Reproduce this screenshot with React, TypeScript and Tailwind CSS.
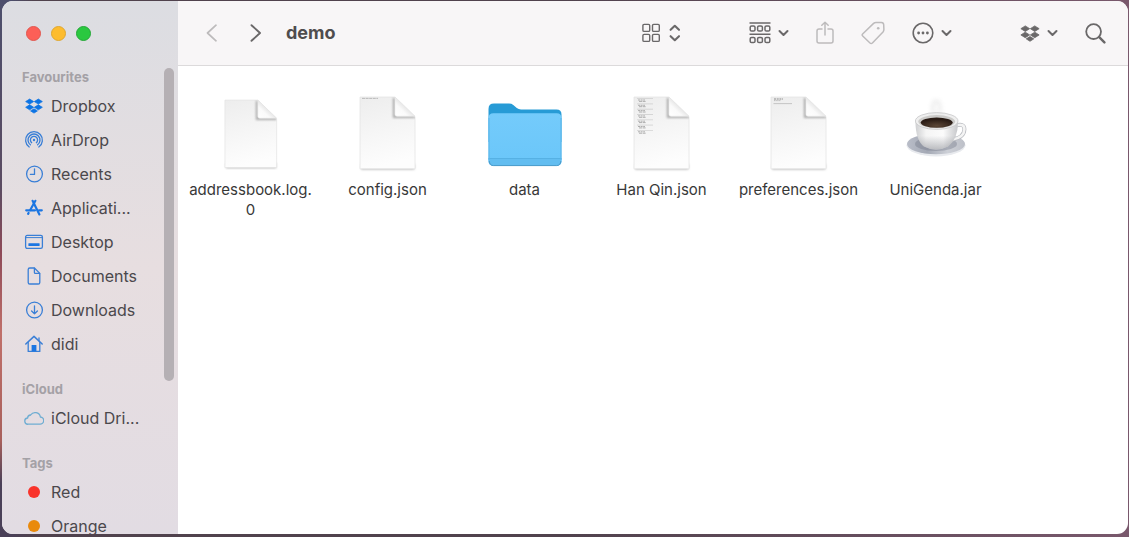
import type { ReactNode } from "react";

type IconProps = { className?: string };

const DROPBOX =
  "M5.7 1 L10.6 4.1 L5.7 7.2 L0.8 4.1 Z M16.3 1 L21.2 4.1 L16.3 7.2 L11.4 4.1 Z M5.7 8 L10.6 11.1 L5.7 14.2 L0.8 11.1 Z M16.3 8 L21.2 11.1 L16.3 14.2 L11.4 11.1 Z M11 12.9 L15.2 15.5 L11 18.2 L6.8 15.5 Z";

function Dropbox({ className }: IconProps) {
  return (
    <svg
      viewBox="0 0 22 19"
      className={className}
      fill="currentColor"
      stroke="currentColor"
      strokeWidth="0.9"
      strokeLinejoin="round"
      aria-hidden="true"
    >
      <path d={DROPBOX} />
    </svg>
  );
}

function Glyph({ children }: { children: ReactNode }) {
  return (
    <svg
      viewBox="0 0 20 20"
      className="h-5 w-5 shrink-0 text-[#3a7fd6]"
      fill="none"
      stroke="currentColor"
      strokeWidth="1.3"
      strokeLinecap="round"
      strokeLinejoin="round"
      aria-hidden="true"
    >
      {children}
    </svg>
  );
}

const favourites: { name: string; icon: ReactNode }[] = [
  {
    name: "Dropbox",
    icon: (
      <span className="flex h-5 w-5 shrink-0 items-center justify-center text-[#0d74e4]">
        <Dropbox className="h-4 w-[18px]" />
      </span>
    ),
  },
  {
    name: "AirDrop",
    icon: (
      <Glyph>
        <path d="M5.2 17 A8.4 8.4 0 1 1 14.8 17" />
        <path d="M6.4 14.8 A6 6 0 1 1 13.6 14.8" />
        <path d="M7.7 12.7 A3.6 3.6 0 1 1 12.3 12.7" />
        <circle cx="10" cy="10" r="1.2" fill="currentColor" stroke="none" />
      </Glyph>
    ),
  },
  {
    name: "Recents",
    icon: (
      <Glyph>
        <circle cx="10.5" cy="10" r="7.9" />
        <path d="M10.5 4.8 V10.4 H6.4" />
      </Glyph>
    ),
  },
  {
    name: "Applicati...",
    icon: (
      <Glyph>
        <g strokeWidth="2.2" stroke="#1c76e2">
          <path d="M8.6 2.8 L15.4 16.4" />
          <path d="M11.4 2.8 L6.2 12" />
          <path d="M2.2 12.3 H11" />
          <path d="M15 12.3 H17.8" />
          <path d="M4.6 15 L4.1 15.9" />
        </g>
      </Glyph>
    ),
  },
  {
    name: "Desktop",
    icon: (
      <Glyph>
        <rect x="1.6" y="3.4" width="16.8" height="13" rx="1.6" />
        <path d="M2 5.6 H18" strokeWidth="1" />
        <rect x="4.4" y="11.2" width="11.2" height="2.9" rx="0.5" fill="#1c76e2" stroke="none" />
      </Glyph>
    ),
  },
  {
    name: "Documents",
    icon: (
      <Glyph>
        <path d="M5.8 2 H10.4 L15.8 7.4 V16.4 A1.6 1.6 0 0 1 14.2 18 H5.8 A1.6 1.6 0 0 1 4.2 16.4 V3.6 A1.6 1.6 0 0 1 5.8 2 Z" />
        <path d="M10.4 2.2 V6.4 A1 1 0 0 0 11.4 7.4 H15.6" />
      </Glyph>
    ),
  },
  {
    name: "Downloads",
    icon: (
      <Glyph>
        <circle cx="10.5" cy="10" r="7.9" />
        <path d="M10.5 5.8 V13.8 M7.6 11 L10.5 13.9 L13.4 11" />
      </Glyph>
    ),
  },
  {
    name: "didi",
    icon: (
      <Glyph>
        <path d="M1.8 10 L10 2.4 L18.2 10" strokeWidth="1.5" />
        <path d="M4.2 8.4 V17.4 H15.8 V8.4 M15 6.8 V3.8" />
        <rect x="7.6" y="11" width="4.8" height="6.4" fill="#1c76e2" stroke="none" />
      </Glyph>
    ),
  },
];

const cloud: { name: string; icon: ReactNode }[] = [
  {
    name: "iCloud Dri...",
    icon: (
      <svg
        viewBox="0 0 20 20"
        className="h-5 w-5 shrink-0 text-[#6fadd2]"
        fill="none"
        stroke="currentColor"
        strokeWidth="1.3"
        aria-hidden="true"
      >
        <path d="M4.2 16.2 H15.8 A3.6 3.6 0 0 0 16.4 9 A5.4 5.4 0 0 0 6.6 7 A3.2 3.2 0 0 0 3.6 10 A3.1 3.1 0 0 0 4.2 16.2 Z" />
      </svg>
    ),
  },
];

const tags: { name: string; icon: ReactNode }[] = [
  { name: "Red", icon: <TagDot color="bg-[#f9332b]" /> },
  { name: "Orange", icon: <TagDot color="bg-[#e98a0c]" /> },
];

function TagDot({ color }: { color: string }) {
  return (
    <span className="flex h-5 w-5 shrink-0 items-center justify-center">
      <span className={`h-3 w-3 rounded-full ${color}`} />
    </span>
  );
}

function Section({ title, items }: { title: string; items: { name: string; icon: ReactNode }[] }) {
  return (
    <section className="mb-4">
      <h2 className="pl-5 text-[13px] leading-6 font-bold text-[#a4a1a6]">{title}</h2>
      <ul>
        {items.map((item) => (
          <li key={item.name}>
            <a href="#" className="flex h-[34px] items-center gap-[7px] pl-[22px] text-base leading-4 whitespace-nowrap text-[#4b484c]">
              {item.icon}
              <span>{item.name}</span>
            </a>
          </li>
        ))}
      </ul>
    </section>
  );
}

function Chevron() {
  return (
    <svg viewBox="0 0 11 8" className="h-2 w-[11px]" fill="none" stroke="currentColor" strokeWidth="2" strokeLinecap="round" strokeLinejoin="round" aria-hidden="true">
      <path d="M1.5 2 L5.5 6 L9.5 2" />
    </svg>
  );
}

function ToolButton({ label, faded, children }: { label: string; faded?: boolean; children: ReactNode }) {
  return (
    <button
      type="button"
      aria-label={label}
      disabled={faded}
      className={`flex h-8 shrink-0 items-center gap-[7px] ${faded ? "text-[#bdbbbc]" : "text-[#6a6869]"}`}
    >
      {children}
    </button>
  );
}

function Toolbar() {
  return (
    <header className="flex h-[65px] shrink-0 items-center border-b border-[#dcdadb] bg-[#f8f6f7] pr-[22px] pl-7">
      <div className="flex items-center gap-8">
        <ToolButton label="Back" faded>
          <svg viewBox="0 0 12 18" className="h-[18px] w-3" fill="none" stroke="currentColor" strokeWidth="1.7" strokeLinecap="round" strokeLinejoin="round">
            <path d="M10 1.2 L1.5 9 L10 16.8" />
          </svg>
        </ToolButton>
        <ToolButton label="Forward">
          <svg viewBox="0 0 12 18" className="h-[18px] w-3" fill="none" stroke="currentColor" strokeWidth="1.9" strokeLinecap="round" strokeLinejoin="round">
            <path d="M1.5 1.2 L10 9 L1.5 16.8" />
          </svg>
        </ToolButton>
      </div>
      <h1 className="ml-6 text-lg font-bold text-[#4f4d4e]">demo</h1>

      <div className="ml-auto flex items-center gap-[68px]">
        <ToolButton label="View as icons">
          <svg viewBox="0 0 20 20" className="h-5 w-5" fill="none" stroke="currentColor" strokeWidth="1.4">
            <rect x="0.9" y="1.4" width="6.8" height="7" rx="1.2" />
            <rect x="10.5" y="1.4" width="6.8" height="7" rx="1.2" />
            <rect x="0.9" y="11.4" width="6.8" height="7" rx="1.2" />
            <rect x="10.5" y="11.4" width="6.8" height="7" rx="1.2" />
          </svg>
          <svg viewBox="0 0 12 18" className="h-[18px] w-3" fill="none" stroke="currentColor" strokeWidth="2.1" strokeLinecap="round" strokeLinejoin="round">
            <path d="M1.6 5.8 L5.8 1.8 L10 5.8 M1.6 12.2 L5.8 16.2 L10 12.2" />
          </svg>
        </ToolButton>

        <div className="flex items-center gap-[27px]">
          <ToolButton label="Group by">
            <svg viewBox="0 0 22 22" className="h-[22px] w-[22px]" fill="none" stroke="currentColor" strokeWidth="1.5">
              <path d="M0.5 1 H21.5 M0.5 12.2 H21.5" />
              <rect x="1.2" y="3.9" width="4.8" height="5.2" rx="1.4" />
              <rect x="8.6" y="3.9" width="4.8" height="5.2" rx="1.4" />
              <rect x="16" y="3.9" width="4.8" height="5.2" rx="1.4" />
              <rect x="1.2" y="15.4" width="4.8" height="5.2" rx="1.4" />
              <rect x="8.6" y="15.4" width="4.8" height="5.2" rx="1.4" />
              <rect x="16" y="15.4" width="4.8" height="5.2" rx="1.4" />
            </svg>
            <Chevron />
          </ToolButton>
          <ToolButton label="Share" faded>
            <svg viewBox="0 0 18 24" className="h-6 w-[18px]" fill="none" stroke="currentColor" strokeWidth="1.5" strokeLinecap="round" strokeLinejoin="round">
              <path d="M6 8 H3 A2 2 0 0 0 1 10 V20 A2 2 0 0 0 3 22 H15 A2 2 0 0 0 17 20 V10 A2 2 0 0 0 15 8 H12" />
              <path d="M9 14 V1.4 M5.8 4.2 L9 1.2 L12.2 4.2" />
            </svg>
          </ToolButton>
          <ToolButton label="Tags" faded>
            <svg viewBox="0 0 24 24" className="h-6 w-6" fill="none" stroke="currentColor" strokeWidth="1.5" strokeLinejoin="round">
              <path d="M1.6 13 L12.6 2.4 Q13.6 1.5 15 1.5 L20.4 1.6 Q22.6 1.7 22.7 3.8 L22.9 8.6 Q22.9 10 22 11 L11.4 22 Q10.2 23 9 22 L1.7 15 Q0.7 14 1.6 13 Z" />
              <circle cx="17.2" cy="7.2" r="1.3" fill="currentColor" stroke="none" />
            </svg>
          </ToolButton>
          <ToolButton label="More actions">
            <svg viewBox="0 0 22 22" className="h-[22px] w-[22px]" fill="none" stroke="currentColor" strokeWidth="1.6">
              <circle cx="11" cy="11" r="9.8" />
              <g fill="currentColor" stroke="none">
                <circle cx="6.6" cy="11" r="1.4" />
                <circle cx="11" cy="11" r="1.4" />
                <circle cx="15.4" cy="11" r="1.4" />
              </g>
            </svg>
            <Chevron />
          </ToolButton>
        </div>

        <div className="flex items-center gap-[27px]">
          <ToolButton label="Dropbox">
            <Dropbox className="h-[17px] w-5" />
            <Chevron />
          </ToolButton>
          <ToolButton label="Search">
            <svg viewBox="0 0 21 21" className="h-[21px] w-[21px]" fill="none" stroke="currentColor" strokeWidth="1.8" strokeLinecap="round">
              <circle cx="8.6" cy="8.6" r="7.4" />
              <path d="M14.2 14.2 L19.4 19.4" strokeWidth="2.4" />
            </svg>
          </ToolButton>
        </div>
      </div>
    </header>
  );
}

function Sheet({ id, small, children }: { id: string; small?: boolean; children?: ReactNode }) {
  return (
    <svg viewBox="0 0 84 84" className="h-[84px] w-[84px]" aria-hidden="true">
      <defs>
        <linearGradient id={`${id}-page`} x1="0" y1="0" x2="0.2" y2="1">
          <stop offset="0" stopColor="#ededed" />
          <stop offset="0.55" stopColor="#f6f6f6" />
          <stop offset="1" stopColor="#fdfdfd" />
        </linearGradient>
        <linearGradient id={`${id}-curl`} x1="0" y1="1" x2="0.55" y2="0.45">
          <stop offset="0" stopColor="#ffffff" />
          <stop offset="0.6" stopColor="#fafafa" />
          <stop offset="1" stopColor="#e2e2e2" />
        </linearGradient>
        <filter id={`${id}-blur`} x="-30%" y="-30%" width="160%" height="160%">
          <feGaussianBlur stdDeviation="1" />
        </filter>
        <clipPath id={`${id}-clip`}>
          <path d="M14 5 H49 L69 24.5 V78 H14 Z" />
        </clipPath>
      </defs>
      <g transform={small ? "translate(2.8 3.4) scale(0.94)" : undefined}>
        <path d="M15 72 H68.5 V77.6 H15 Z" fill="#8a8a8a" opacity="0.6" filter={`url(#${id}-blur)`} />
        <path d="M14 5 H49 L69 24.5 V76.8 H14 Z" fill={`url(#${id}-page)`} stroke="#e4e4e4" strokeWidth="0.8" />
        {children}
        <g clipPath={`url(#${id}-clip)`}>
          <path d="M48 6 V25 H69" fill="none" stroke="#8c8c8c" strokeWidth="2.2" opacity="0.7" filter={`url(#${id}-blur)`} />
        </g>
        <path d="M49 5 L69 24.2 H51 Q49 24.2 49 22.2 Z" fill={`url(#${id}-curl)`} stroke="#e6e6e6" strokeWidth="0.5" />
      </g>
    </svg>
  );
}

function ConfigSheet() {
  return (
    <Sheet id="config">
      <path d="M16 6.4 H32" stroke="#b4b4b4" strokeWidth="0.9" strokeDasharray="3 0.6" />
    </Sheet>
  );
}

function HanQinSheet() {
  const rows = [8, 13.3, 18.6, 23.9, 29.2, 34.5, 39.8];
  return (
    <Sheet id="hanqin">
      <g stroke="#aeaeae" strokeWidth="1">
        {rows.map((y) => (
          <g key={y}>
            <path d={`M17 ${y - 1.4} H33`} strokeWidth="0.6" opacity="0.7" />
            <path d={`M18 ${y} H25`} strokeDasharray="2 0.6" />
            <path d={`M19 ${y + 1.4} H26`} strokeDasharray="3 0.6" />
          </g>
        ))}
      </g>
    </Sheet>
  );
}

function PreferencesSheet() {
  return (
    <Sheet id="preferences">
      <g stroke="#adadad" fill="none">
        <path d="M17 7 H26" strokeWidth="1.5" strokeDasharray="2 0.7" />
        <path d="M17 8.6 H24" strokeWidth="0.8" strokeDasharray="1.5 0.7" />
        <path d="M16.5 11.6 H35" strokeWidth="0.8" opacity="0.8" />
      </g>
    </Sheet>
  );
}

function Folder() {
  return (
    <svg viewBox="0 0 84 84" className="h-[84px] w-[84px]" aria-hidden="true">
      <defs>
        <linearGradient id="folder-front" x1="0" y1="0" x2="0" y2="1">
          <stop offset="0" stopColor="#74cbfb" />
          <stop offset="1" stopColor="#6ac6f9" />
        </linearGradient>
      </defs>
      <path d="M5.5 17 Q5.5 11.6 11 11.6 H26 Q28.5 11.6 30.3 13 L33.8 16 Q35.6 17.4 38 17.4 H73.5 Q78.5 17.4 78.5 22.5 V50 H5.5 Z" fill="#279bd6" />
      <path d="M5.5 26 Q5.5 21.2 10.5 21.2 H73.5 Q78.5 21.2 78.5 26 V68.5 Q78.5 73.8 73.5 73.8 H10.5 Q5.5 73.8 5.5 68.5 Z" fill="url(#folder-front)" />
      <path d="M5.5 66.5 H78.5 V68.5 Q78.5 73.8 73.5 73.8 H10.5 Q5.5 73.8 5.5 68.5 Z" fill="#62bdf0" />
      <path d="M5.5 66.5 H78.5" stroke="#52acdf" strokeWidth="0.8" />
      <path d="M6.2 69 Q6.8 73.6 10.5 73.6 H73.5 Q77.4 73.6 77.9 69" fill="none" stroke="#4796c4" strokeWidth="0.9" />
      <path d="M6 26 V68 M78 26 V68" stroke="#5bb5e8" strokeWidth="1" />
    </svg>
  );
}

function Coffee() {
  return (
    <svg viewBox="0 0 84 84" className="h-[84px] w-[84px]" aria-hidden="true">
      <defs>
        <linearGradient id="cup-body" x1="0" y1="0" x2="1" y2="0">
          <stop offset="0" stopColor="#cfd0d2" />
          <stop offset="0.25" stopColor="#f5f5f5" />
          <stop offset="0.65" stopColor="#fbfbfb" />
          <stop offset="1" stopColor="#c6c7ca" />
        </linearGradient>
        <linearGradient id="cup-shade" x1="0" y1="0" x2="0" y2="1">
          <stop offset="0.5" stopColor="#7d8088" stopOpacity="0" />
          <stop offset="1" stopColor="#7d8088" stopOpacity="0.5" />
        </linearGradient>
        <linearGradient id="saucer" x1="0" y1="0" x2="1" y2="0">
          <stop offset="0" stopColor="#b9bdc8" />
          <stop offset="0.35" stopColor="#a4a9b5" />
          <stop offset="0.7" stopColor="#cdd0d7" />
          <stop offset="1" stopColor="#bdc0c8" />
        </linearGradient>
        <radialGradient id="brew" cx="0.5" cy="0.8" r="0.6">
          <stop offset="0" stopColor="#5b4636" />
          <stop offset="1" stopColor="#2a1c15" />
        </radialGradient>
        <filter id="steam" x="-80%" y="-50%" width="260%" height="200%">
          <feGaussianBlur stdDeviation="2" />
        </filter>
      </defs>
      <ellipse cx="42" cy="53.2" rx="29.5" ry="11.2" fill="#e8eaee" />
      <ellipse cx="42" cy="52" rx="29" ry="10.2" fill="url(#saucer)" />
      <ellipse cx="42" cy="52" rx="21" ry="7" fill="#737988" opacity="0.4" />
      <path d="M62 33.5 Q70.5 31 70.4 37.5 Q70 45.5 58.5 47.5" fill="none" stroke="#b9bbc0" strokeWidth="4" />
      <path d="M62 33.5 Q70.5 31 70.4 37.5 Q70 45.5 58.5 47.5" fill="none" stroke="#f4f4f4" strokeWidth="2.6" />
      <path d="M21.5 30 Q21.5 48 30 54.5 Q42 60.5 54 54.5 Q64 47 64 30 Z" fill="url(#cup-body)" />
      <path d="M21.5 30 Q21.5 48 30 54.5 Q42 60.5 54 54.5 Q64 47 64 30 Z" fill="url(#cup-shade)" />
      <ellipse cx="42.7" cy="29" rx="21.3" ry="8.4" fill="#efefef" stroke="#c6c6c8" strokeWidth="0.8" />
      <ellipse cx="42.7" cy="29.6" rx="18.4" ry="6.6" fill="#cbcac8" />
      <ellipse cx="42.7" cy="30.6" rx="16" ry="5.2" fill="url(#brew)" />
      <path d="M40 22 Q37 15 41 8 M45 22 Q48 14 43 8" fill="none" stroke="#c4c4c4" strokeWidth="3" opacity="0.35" filter="url(#steam)" />
    </svg>
  );
}

const files: { name: string; art: ReactNode }[] = [
  { name: "addressbook.log.0", art: <Sheet id="log" small /> },
  { name: "config.json", art: <ConfigSheet /> },
  { name: "data", art: <Folder /> },
  { name: "Han Qin.json", art: <HanQinSheet /> },
  { name: "preferences.json", art: <PreferencesSheet /> },
  { name: "UniGenda.jar", art: <Coffee /> },
];

export default function App() {
  return (
    <div className="h-screen bg-[linear-gradient(to_right,transparent_1%,#50424d_3%,#50424d_50%,#79586c),linear-gradient(to_bottom,#4c4e6c,#5b4c62_35%,#8e4a58_47%,#c0706a_62%,#a8605c_82%,#4a4058_90%)] pt-px pr-px pb-[3px] pl-[2px] font-['Inter','Liberation_Sans',sans-serif]">
      <div className="flex h-full overflow-hidden rounded-[11px] bg-white">
        <aside className="flex w-44 shrink-0 flex-col bg-linear-to-b from-[#dcdde2] via-[#e7dee0] to-[#e2dce3]">
          <div className="flex h-16 shrink-0 items-center gap-2.5 pl-6">
            <button type="button" aria-label="Close" className="h-[15px] w-[15px] rounded-full border border-[#e1574f] bg-[#fc5f57]" />
            <button type="button" aria-label="Minimise" className="h-[15px] w-[15px] rounded-full border border-[#dfa730] bg-[#fdbc2e]" />
            <button type="button" aria-label="Zoom" className="h-[15px] w-[15px] rounded-full border border-[#24a837] bg-[#2ac840]" />
          </div>
          <div className="flex min-h-0 flex-1">
            <nav aria-label="Sidebar" className="min-w-0 flex-1 overflow-y-auto [scrollbar-width:none]">
              <Section title="Favourites" items={favourites} />
              <Section title="iCloud" items={cloud} />
              <Section title="Tags" items={tags} />
            </nav>
            <div className="mt-[3px] mr-1 h-2/3 w-[10px] rounded-full bg-[#b5b0b4]" />
          </div>
        </aside>

        <div className="flex min-w-0 flex-1 flex-col">
          <Toolbar />
          <main className="flex-1 overflow-hidden pt-[26px] pl-1">
            <ul className="grid grid-cols-[repeat(auto-fill,137px)] gap-y-6">
              {files.map((file) => (
                <li key={file.name} className="flex flex-col items-center gap-1">
                  {file.art}
                  <span className="w-[126px] text-center text-[15px] leading-5 break-words text-[#383838]">{file.name}</span>
                </li>
              ))}
            </ul>
          </main>
        </div>
      </div>
    </div>
  );
}
